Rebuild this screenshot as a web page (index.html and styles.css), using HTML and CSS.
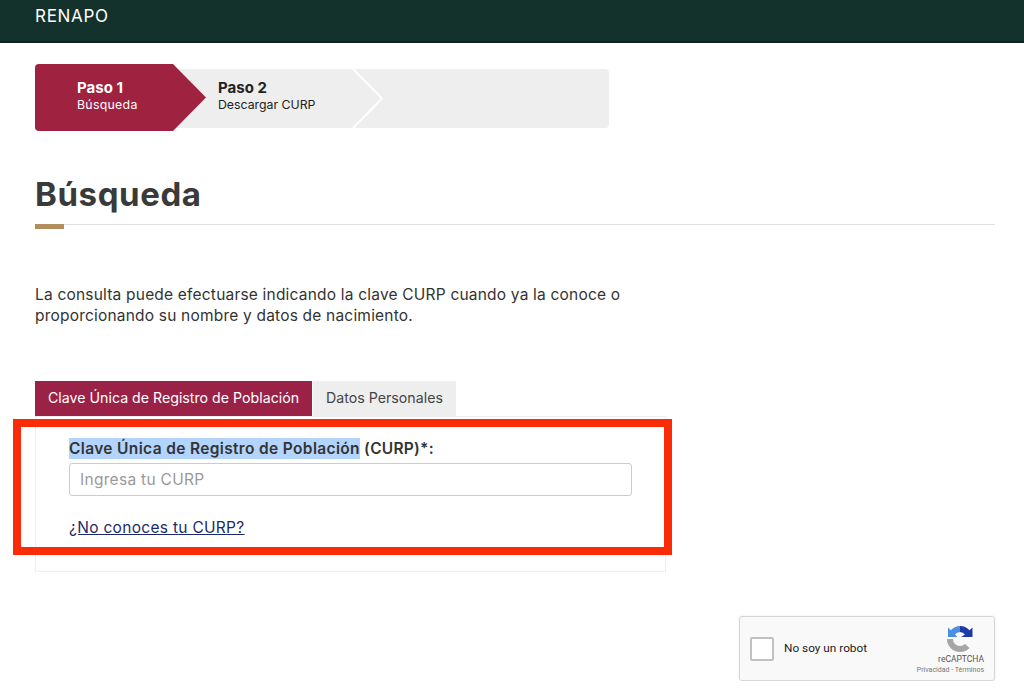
FILE: index.html
```html
<!DOCTYPE html>
<html lang="es">
<head>
<meta charset="UTF-8">
<title>RENAPO - Búsqueda</title>
<link rel="stylesheet" href="styles.css">
</head>
<body>
    <div class="topbar">RENAPO</div>
    <div class="wrapper">
        <div class="steps">
            <div class="step step-active">
                <b>Paso 1</b>
                <span>Búsqueda</span>
            </div>
            <div class="step step-next">
                <b>Paso 2</b>
                <span>Descargar CURP</span>
                <svg class="chevron" width="32" height="59" viewBox="0 0 32 59"><path d="M1 0 L30 29.5 L1 59" fill="none" stroke="#fff" stroke-width="2"/></svg>
            </div>
            <div class="step step-rest"></div>
        </div>

        <h1 class="title">Búsqueda</h1>
        <div class="title-line"></div>

        <p class="intro">La consulta puede efectuarse indicando la clave CURP cuando ya la conoce o<br>proporcionando su nombre y datos de nacimiento.</p>

        <div class="tabs">
            <div class="tab tab-active">Clave Única de Registro de Población</div>
            <div class="tab">Datos Personales</div>
        </div>
        <div class="panel">
            <label class="field-label"><span class="selected">Clave Única de Registro de Población</span> (CURP)*:</label>
            <input class="field" type="text" placeholder="Ingresa tu CURP">
            <a class="help-link" href="#">¿No conoces tu CURP?</a>
            <div class="red-box"></div>
        </div>

        <div class="captcha-row">
            <div class="captcha">
                <div class="captcha-check"></div>
                <div class="captcha-text">No soy un robot</div>
                <div class="captcha-brand">
                    <svg class="captcha-logo" width="26" height="26" viewBox="0 0 26 26">
                        <path d="M13 0 V6 A7 7 0 0 0 8 8.500 L10.500 11 H1 V1.500 L3.800 4.300 A13 13 0 0 1 13 0 Z" fill="#4a90e2"/>
                        <path d="M13 0 A13 13 0 0 1 22.500 4.300 L25.500 1.500 V11 H14 L18 8.500 A7 7 0 0 0 13 6 Z" fill="#1c3aa9"/>
                        <path d="M0 13 H6 A7 7 0 0 0 13 20 A7 7 0 0 0 18 18 L22.500 22 A13 13 0 0 1 13 26 A13 13 0 0 1 0 13 Z" fill="#a6a6a6"/>
                    </svg>
                    <div class="brand-name">reCAPTCHA</div>
                    <div class="brand-links">Privacidad - Términos</div>
                </div>
            </div>
        </div>
    </div>
</body>
</html>
```

FILE: styles.css
```css
body{
    margin:0;
    background:#fff;
    font-family:"Inter","Liberation Sans",sans-serif;
    color:#333;
    overflow:hidden;
}
.topbar{
    height:43px;
    padding-left:35px;
    background:#13322b;
    border-bottom:2px solid #0c231e;
    box-sizing:border-box;
    color:#fff;
    font-size:17px;
    letter-spacing:.7px;
    line-height:32px;
}
.wrapper{
    padding:0 29px 0 35px;
}

/* pasos */
.steps{
    display:flex;
    align-items:center;
    width:574px;
    height:67px;
    margin-top:21px;
}
.step{
    height:59px;
    margin-top:2px;
    background:#eee;
    box-sizing:border-box;
}
.step b{
    display:block;
    font-size:15px;
    line-height:19px;
}
.step span{
    display:block;
    font-size:12.3px;
    line-height:16px;
}
.step-active{
    position:relative;
    z-index:1;
    width:171px;
    height:67px;
    margin-top:0;
    padding:14px 0 0 42px;
    background:#9f2241;
    color:#fff;
    border-radius:4px 0 0 4px;
    clip-path:polygon(0 0, 138px 0, 171px 50%, 138px 100%, 0 100%);
}
.step-active span{
    letter-spacing:.3px;
}
.step-next{
    position:relative;
    width:176px;
    margin-left:-30px;
    padding:9px 0 0 42px;
    color:#222;
}
.chevron{
    position:absolute;
    left:176px;
    top:0;
}
.step-rest{
    flex:1;
    border-radius:0 4px 4px 0;
}

/* titulo */
.title{
    margin:40px 0 0;
    font-size:33px;
    letter-spacing:.6px;
    line-height:47px;
    font-weight:700;
    color:#3a3a3a;
}
.title-line{
    height:1px;
    margin-top:6px;
    background:#e0e0e0;
    position:relative;
}
.title-line:after{
    content:"";
    position:absolute;
    left:0;
    top:0;
    width:29px;
    height:5px;
    background:#b38e5d;
}
.intro{
    margin:59px 0 0;
    font-size:15.5px;
    letter-spacing:.2px;
    line-height:21px;
    color:#333;
}

/* tabs */
.tabs{
    display:flex;
    gap:1px;
    margin-top:55px;
}
.tab{
    height:35px;
    padding:0 13px;
    background:#eee;
    font-size:14.2px;
    line-height:33px;
    color:#444;
}
.tab-active{
    background:#9b2247;
    color:#fff;
}

.panel{
    position:relative;
    width:631px;
    height:156px;
    box-sizing:border-box;
    border:1px solid #eee;
    padding:20px 0 0 33px;
}
.field-label{
    display:block;
    height:21px;
    padding-top:1px;
    font-size:15.5px;
    letter-spacing:.25px;
    font-weight:600;
    line-height:21px;
    color:#333;
}
.selected{
    display:inline-block;
    letter-spacing:.35px;
    background:#b3d4fc;
}
.field{
    display:block;
    width:563px;
    height:33px;
    margin-top:4px;
    padding:0 10px;
    box-sizing:border-box;
    border:1px solid #ccc;
    border-radius:3px;
    font-family:inherit;
    font-size:15.5px;
    letter-spacing:.3px;
    color:#333;
}
.field::placeholder{
    color:#999;
}
.help-link{
    display:inline-block;
    margin-top:22px;
    font-size:15.5px;
    letter-spacing:.3px;
    color:#1b2a6b;
}
.red-box{
    position:absolute;
    left:-23px;
    top:2px;
    width:659px;
    height:136px;
    box-sizing:border-box;
    border:8px solid #f92c07;
}

/* recaptcha */
.captcha-row{
    display:flex;
    justify-content:flex-end;
    margin-top:44px;
}
.captcha{
    display:flex;
    align-items:center;
    width:256px;
    height:65px;
    box-sizing:border-box;
    background:#f9f9f9;
    border:1px solid #d6d6d6;
    border-radius:3px;
    box-shadow:0 0 3px rgba(0,0,0,.08);
    font-family:"Roboto","Liberation Sans",sans-serif;
}
.captcha-check{
    width:24px;
    height:24px;
    margin-left:10px;
    box-sizing:border-box;
    background:#fff;
    border:2px solid #c1c1c1;
    border-radius:2px;
}
.captcha-text{
    flex:1;
    margin:0 0 2px 10px;
    font-size:11.8px;
    color:#222;
}
.captcha-brand{
    display:flex;
    flex-direction:column;
    align-items:flex-end;
    margin:4px 10px 0 0;
    color:#555;
}
.captcha-logo{
    margin-right:11px;
}
.brand-name{
    font-size:8.5px;
    line-height:11px;
    margin-top:2px;
}
.brand-links{
    font-size:7px;
    line-height:9px;
    margin-top:1px;
    white-space:nowrap;
    color:#777;
}
```
